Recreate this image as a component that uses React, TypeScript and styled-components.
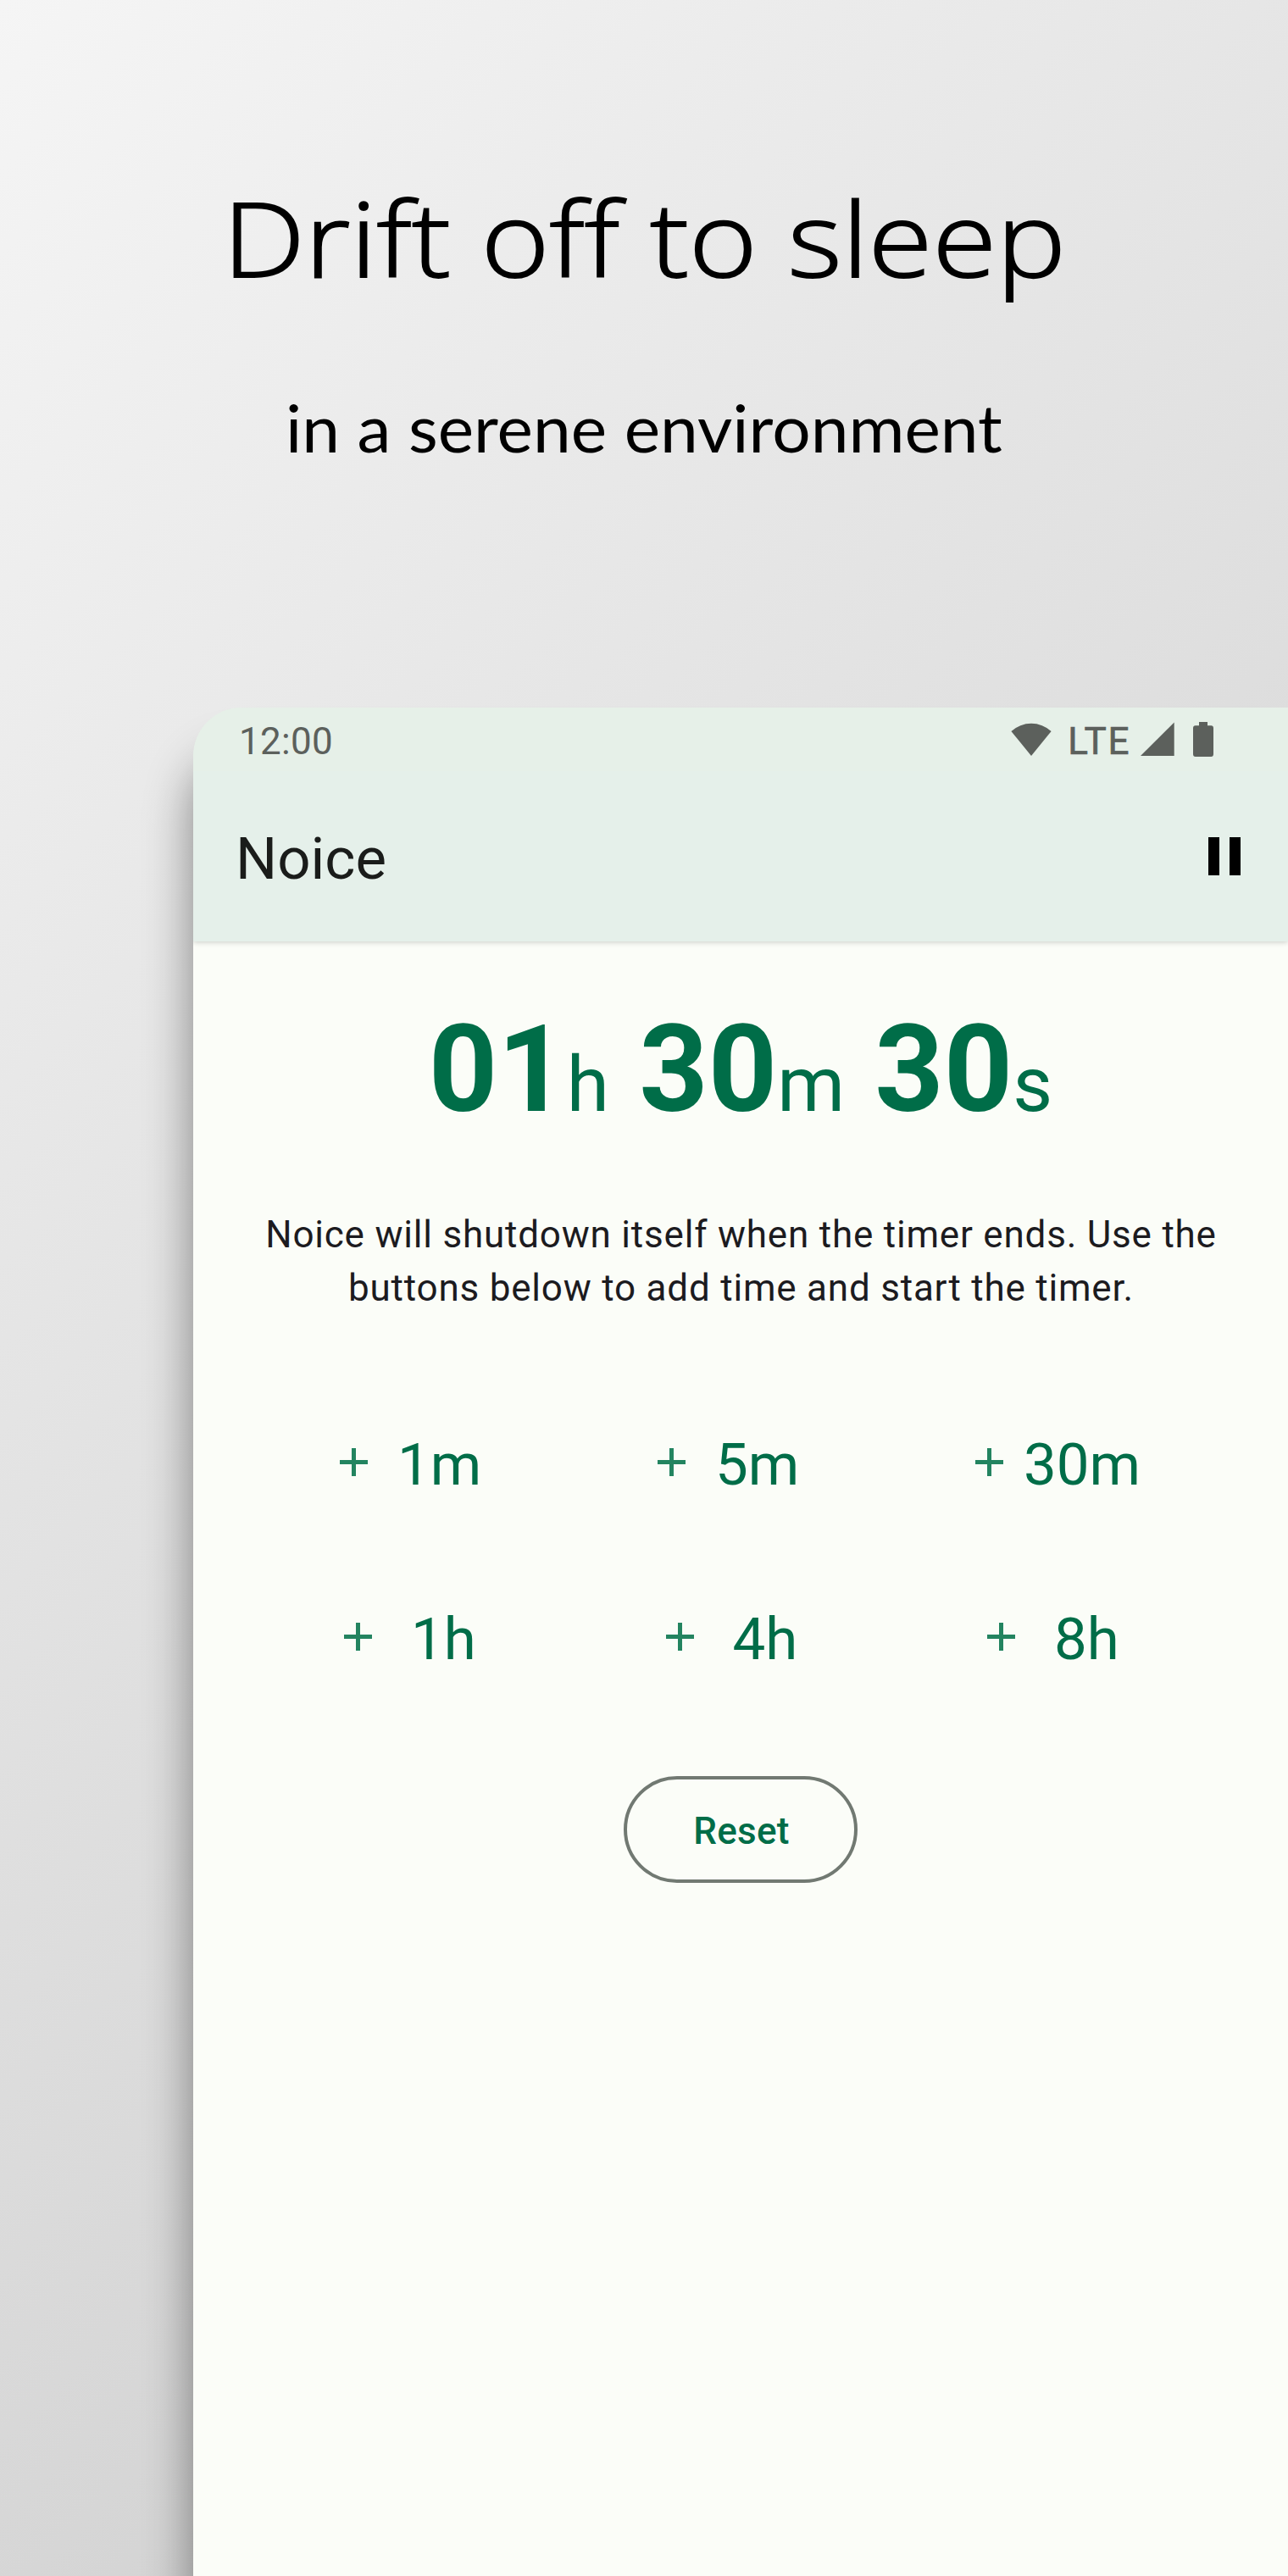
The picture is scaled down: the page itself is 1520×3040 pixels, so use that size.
import React from "react";
import styled, { createGlobalStyle } from "styled-components";

const green = "#006d48";
const muted = "#5c605c";

const GlobalStyle = createGlobalStyle`
  body { margin: 0; }
  * { box-sizing: border-box; }
`;

const Page = styled.main`
  display: flex;
  flex-direction: column;
  width: 1520px;
  height: 3040px;
  overflow: hidden;
  background: linear-gradient(135deg, #f5f5f5, #c7c7c7);
  font-family: Roboto, "Liberation Sans", sans-serif;
`;

const Hero = styled.header`
  display: flex;
  flex-direction: column;
  align-items: center;
  flex: none;
  height: 835px;
  padding-top: 205px;
  color: #000;
  white-space: nowrap;
`;

const Title = styled.h1`
  margin: 0 0 99px;
  font: 300 121px/150px "Open Sans", sans-serif;
  -webkit-text-stroke: 1.8px #000;
  transform: scaleX(1.138);
`;

const Subtitle = styled.p`
  margin: 0;
  font: 400 77px/100px Lato, sans-serif;
  transform: scaleX(1.042);
`;

const Phone = styled.section`
  flex: 1;
  margin-left: 228px;
  border-top-left-radius: 57px;
  background: #fbfdf8;
  box-shadow: 0 60px 56px rgba(0, 0, 0, 0.44);
`;

const PhoneHeader = styled.div`
  height: 276px;
  border-top-left-radius: 57px;
  background: #e5f0ea;
  box-shadow: 0 1px 6px rgba(0, 0, 0, 0.2);
  clip-path: inset(0 0 -20px 0 round 57px 0 0 0);
`;

const StatusBar = styled.div`
  display: flex;
  align-items: center;
  height: 75px;
  padding: 4px 88px 0 54px;
  border-top-left-radius: 57px;
  background: #e6f0e8;
  color: ${muted};
  font-size: 44px;
  line-height: 52px;
`;

const Clock = styled.span`
  margin-right: auto;
  letter-spacing: 0.3px;
`;

const Network = styled.span`
  margin: 0 12px 0 19px;
  -webkit-text-stroke: 0.7px ${muted};
  letter-spacing: 1.6px;
`;

const StatusIcon = styled.svg<{ $gap?: number }>`
  flex: none;
  margin: 0 0 5px ${(p) => p.$gap ?? 0}px;
  fill: ${muted};
`;

const Toolbar = styled.div`
  display: flex;
  align-items: center;
  justify-content: space-between;
  height: 201px;
  padding: 0 56px 0 50px;
`;

const AppName = styled.h2`
  margin: 0;
  padding-top: 7px;
  color: #1a1c1a;
  font-size: 69px;
  font-weight: 400;
  line-height: 82px;
`;

const PauseButton = styled.button`
  display: flex;
  gap: 12.5px;
  padding: 0;
  border: 0;
  background: none;
`;

const PauseBar = styled.span`
  width: 12.8px;
  height: 44.5px;
  background: #000;
`;

const Content = styled.div`
  display: flex;
  flex-direction: column;
  align-items: center;
  padding-top: 72px;
`;

const Timer = styled.div`
  height: 160px;
  color: ${green};
  font-size: 142px;
  font-weight: 700;
  line-height: 160px;
  white-space: pre;
`;

const Unit = styled.span`
  font-size: 91px;
  font-weight: 400;
  line-height: 1;
`;

const Message = styled.p`
  width: 1180px;
  margin: 83px 0 136px;
  padding-left: 1px;
  color: #1c1b1f;
  font-size: 44px;
  line-height: 63px;
  letter-spacing: 0.79px;
  text-align: center;
`;

const AddRow = styled.div<{ $inset: number; $column: number }>`
  display: grid;
  grid-template-columns: ${(p) => p.$column}px ${(p) => p.$column}px auto;
  align-self: stretch;
  padding-left: ${(p) => p.$inset}px;
  & + & { margin-top: 123.5px; }
`;

const AddButton = styled.button<{ $gap: number }>`
  display: flex;
  align-items: center;
  gap: ${(p) => p.$gap}px;
  padding: 0;
  border: 0;
  background: none;
  color: ${green};
  font: 400 69px/82px Roboto, sans-serif;
`;

const PlusIcon = styled.svg`
  flex: none;
  margin-bottom: 7px;
  fill: #238460;
`;

const ResetButton = styled.button`
  width: 276px;
  height: 126px;
  margin-top: 120.5px;
  padding: 3px 0 0 2px;
  border: 4px solid #717972;
  border-radius: 63px;
  background: none;
  color: ${green};
  font: 500 44px/52px Roboto, sans-serif;
  letter-spacing: 0.3px;
`;

const rows = [
  { inset: 161, column: 375, items: [["1m", 23], ["5m", 23], ["30m", 12]] as [string, number][] },
  { inset: 166, column: 379.5, items: [["1h", 34], ["4h", 34], ["8h", 34]] as [string, number][] },
];

export default function App() {
  return (
    <>
      <GlobalStyle />
      <Page>
        <Hero>
          <Title>Drift off to sleep</Title>
          <Subtitle>in a serene environment</Subtitle>
        </Hero>
        <Phone>
          <PhoneHeader>
            <StatusBar>
              <Clock>12:00</Clock>
              <StatusIcon width="48" height="40" viewBox="0 0 48 40">
                <path d="M24 40 0.4 11A35 35 0 0 1 47.6 11Z" />
              </StatusIcon>
              <Network>LTE</Network>
              <StatusIcon width="40" height="40" viewBox="0 0 40 40">
                <path d="M0 40H39.7V0.5Z" />
              </StatusIcon>
              <StatusIcon $gap={22} width="24" height="41" viewBox="0 0 24 41">
                <path d="M7 0H17V4.3H21.2Q24 4.3 24 7.2V38Q24 41 21.2 41H2.8Q0 41 0 38V7.2Q0 4.3 2.8 4.3H7Z" />
              </StatusIcon>
            </StatusBar>
            <Toolbar>
              <AppName>Noice</AppName>
              <PauseButton aria-label="Pause">
                <PauseBar />
                <PauseBar />
              </PauseButton>
            </Toolbar>
          </PhoneHeader>
          <Content>
            <Timer>
              01<Unit>h</Unit> 30<Unit>m</Unit> 30<Unit>s</Unit>
            </Timer>
            <Message>
              Noice will shutdown itself when the timer ends. Use the buttons below to add time and start the timer.
            </Message>
            {rows.map((row) => (
              <AddRow key={row.inset} $inset={row.inset} $column={row.column}>
                {row.items.map(([label, gap]) => (
                  <AddButton key={label} $gap={gap}>
                    <PlusIcon width="57" height="57" viewBox="0 0 57 57">
                      <path d="M12 26H26V12H31V26H45V31H31V45H26V31H12Z" />
                    </PlusIcon>
                    {label}
                  </AddButton>
                ))}
              </AddRow>
            ))}
            <ResetButton>Reset</ResetButton>
          </Content>
        </Phone>
      </Page>
    </>
  );
}
